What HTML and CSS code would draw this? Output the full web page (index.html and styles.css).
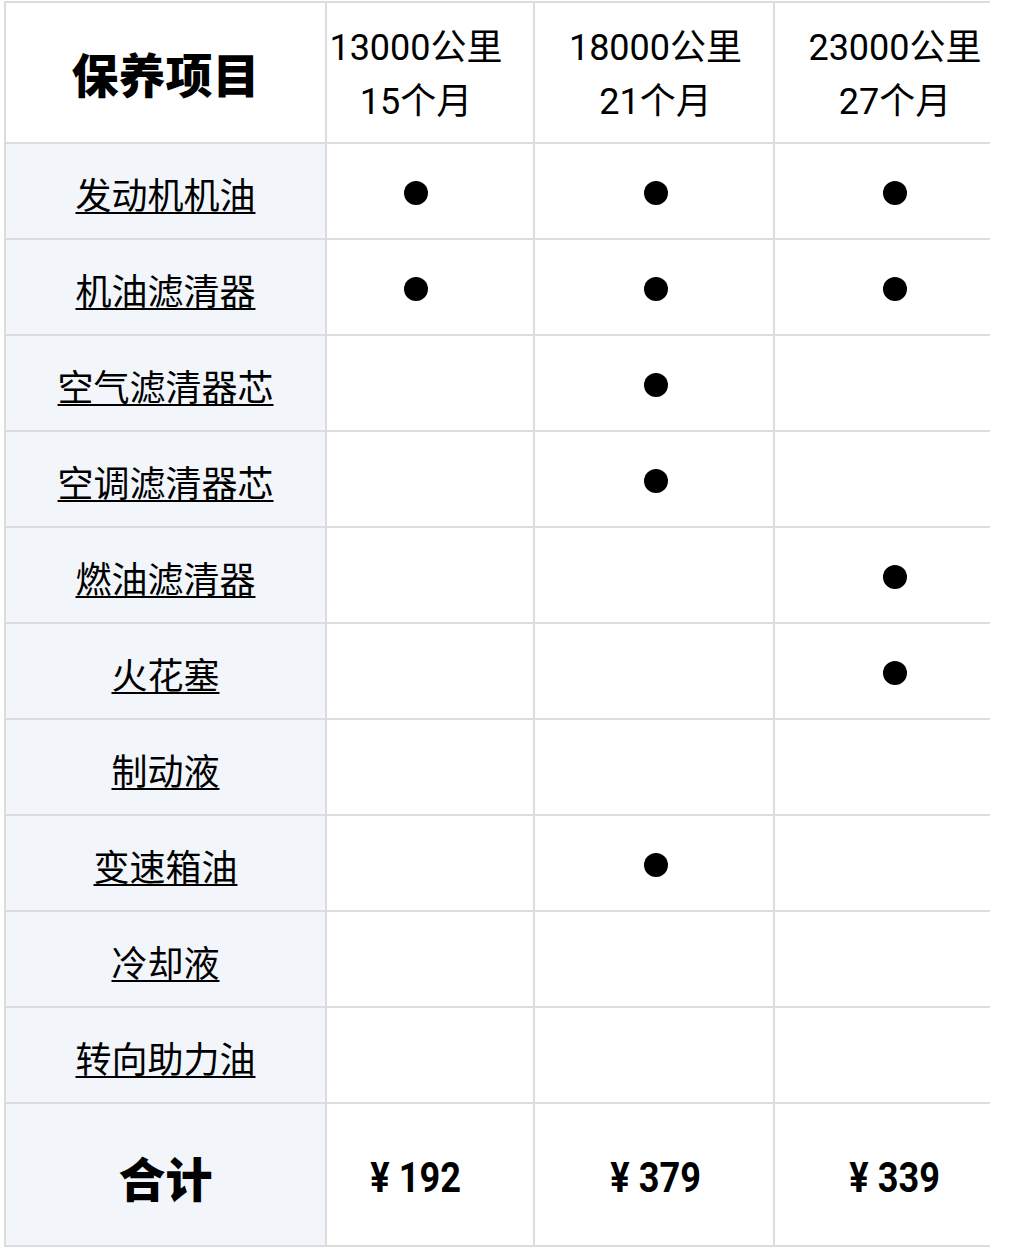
FILE: index.html
```html
<!DOCTYPE html>
<html lang="zh-CN">
<head>
<meta charset="utf-8">
<link rel="stylesheet" href="styles.css">
</head>
<body>
<div class="table">
  <div class="cell head label-head"><span class="title">保养项目</span></div>
  <div class="cell head c2"><span>13000公里</span><span>15个月</span></div>
  <div class="cell head c3"><span>18000公里</span><span>21个月</span></div>
  <div class="cell head c4"><span>23000公里</span><span>27个月</span></div>

  <div class="cell label"><u>发动机机油</u></div>
  <div class="cell c2"><i class="dot"></i></div>
  <div class="cell c3"><i class="dot"></i></div>
  <div class="cell c4"><i class="dot"></i></div>

  <div class="cell label"><u>机油滤清器</u></div>
  <div class="cell c2"><i class="dot"></i></div>
  <div class="cell c3"><i class="dot"></i></div>
  <div class="cell c4"><i class="dot"></i></div>

  <div class="cell label"><u>空气滤清器芯</u></div>
  <div class="cell c2"></div>
  <div class="cell c3"><i class="dot"></i></div>
  <div class="cell c4"></div>

  <div class="cell label"><u>空调滤清器芯</u></div>
  <div class="cell c2"></div>
  <div class="cell c3"><i class="dot"></i></div>
  <div class="cell c4"></div>

  <div class="cell label"><u>燃油滤清器</u></div>
  <div class="cell c2"></div>
  <div class="cell c3"></div>
  <div class="cell c4"><i class="dot"></i></div>

  <div class="cell label"><u>火花塞</u></div>
  <div class="cell c2"></div>
  <div class="cell c3"></div>
  <div class="cell c4"><i class="dot"></i></div>

  <div class="cell label"><u>制动液</u></div>
  <div class="cell c2"></div>
  <div class="cell c3"></div>
  <div class="cell c4"></div>

  <div class="cell label"><u>变速箱油</u></div>
  <div class="cell c2"></div>
  <div class="cell c3"><i class="dot"></i></div>
  <div class="cell c4"></div>

  <div class="cell label"><u>冷却液</u></div>
  <div class="cell c2"></div>
  <div class="cell c3"></div>
  <div class="cell c4"></div>

  <div class="cell label"><u>转向助力油</u></div>
  <div class="cell c2"></div>
  <div class="cell c3"></div>
  <div class="cell c4"></div>

  <div class="cell total label"><span class="title">合计</span></div>
  <div class="cell total c2"><span class="price">¥ 192</span></div>
  <div class="cell total c3"><span class="price">¥ 379</span></div>
  <div class="cell total c4"><span class="price">¥ 339</span></div>
</div>
</body>
</html>
```

FILE: styles.css
```css
html, body {
  margin: 0;
  padding: 0;
  background: #ffffff;
}

body {
  font-family: Roboto, "Noto Sans CJK SC", sans-serif;
  color: #000000;
}

.table {
  margin: 1px 0 0 4px;
  width: 986px;
  display: grid;
  grid-template-columns: 319px 206px 238px 215px;
  grid-template-rows: 139px repeat(10, 94px) 141px;
  gap: 2px;
  padding: 2px 0 2px 2px;
  box-sizing: border-box;
  background: #dcdcdc;
}

.cell {
  background: #ffffff;
  display: flex;
  align-items: center;
  justify-content: center;
  box-sizing: border-box;
}

.label {
  background: #f2f5fa;
  font-family: "Noto Sans CJK SC", sans-serif;
  font-size: 36px;
  padding-top: 4px;
}

.label u {
  text-decoration-thickness: 2px;
  text-underline-offset: 3px;
}

.label-head {
  background: #ffffff;
}

.title {
  font-family: "Noto Sans CJK SC", sans-serif;
  font-weight: 900;
  font-size: 47px;
}

.head {
  flex-direction: column;
  font-size: 36px;
  line-height: 54px;
  padding-top: 5px;
}

.head.label-head {
  padding-top: 0;
}

.c2 {
  padding-right: 28px;
}

.c3 {
  padding-left: 3px;
}

.c4 {
  padding-left: 25px;
}

.dot {
  display: block;
  width: 24px;
  height: 24px;
  border-radius: 50%;
  background: #000000;
  margin-top: 3px;
}

.total.label {
  padding-top: 4px;
}

.price {
  display: inline-block;
  font-family: Roboto, sans-serif;
  font-weight: 700;
  font-size: 42px;
  transform: scaleX(0.86);
  padding-top: 6px;
}
```
